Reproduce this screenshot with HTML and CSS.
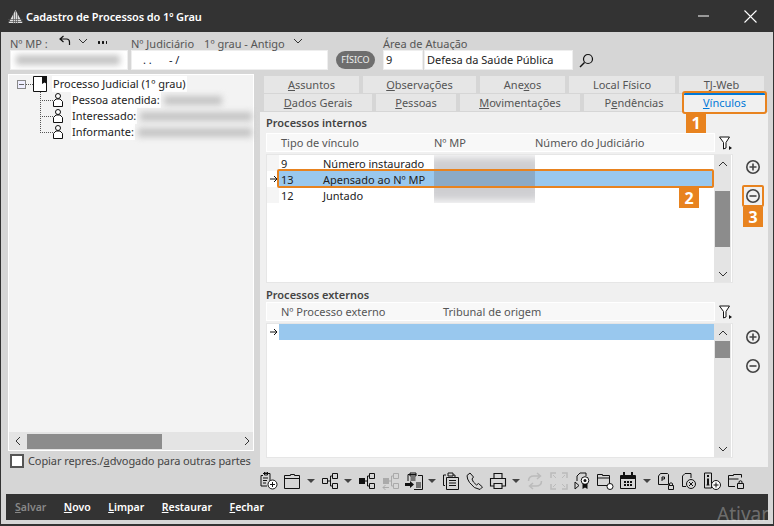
FILE: index.html
```html
<!DOCTYPE html>
<html lang="pt">
<head>
  <meta charset="UTF-8">
  <title>Cadastro de Processos do 1º Grau</title>
  <link rel="stylesheet" href="styles.css">
</head>
<body>
  <!-- simbolos reutilizados -->
  <svg class="sprite" width="0" height="0">
    <symbol id="chev-down" viewBox="0 0 10 6"><path d="M1 1l4 4 4-4" fill="none" stroke="#333"/></symbol>
    <symbol id="chev-up" viewBox="0 0 10 6"><path d="M1 5l4-4 4 4" fill="none" stroke="#333"/></symbol>
    <symbol id="chev-left" viewBox="0 0 6 10"><path d="M5 1L1 5l4 4" fill="none" stroke="#333"/></symbol>
    <symbol id="chev-right" viewBox="0 0 6 10"><path d="M1 1l4 4-4 4" fill="none" stroke="#333"/></symbol>
    <symbol id="arrow" viewBox="0 0 8 8"><path d="M0 4h7M4 1l3 3-3 3" fill="none" stroke="#111"/></symbol>
    <symbol id="person" viewBox="0 0 12 14"><circle cx="6" cy="3" r="2.5" fill="#fff" stroke="#111"/><path d="M4 6h4L10.500 8.500v5h-9v-5z" fill="#fff" stroke="#111"/></symbol>
    <symbol id="funnel" viewBox="0 0 13 14"><path d="M.5 1h10L7 6.5V12L4.5 13V6.5z" fill="#fff" stroke="#111"/><path d="M10 10l3 2-3 2z" fill="#111"/></symbol>
    <symbol id="add" viewBox="0 0 16 16"><circle cx="8" cy="8" r="6.2" fill="none" stroke="#444" stroke-width="1.6"/><path d="M4.5 8h7M8 4.5v7" stroke="#444" stroke-width="1.6"/></symbol>
    <symbol id="remove" viewBox="0 0 16 16"><circle cx="8" cy="8" r="6.2" fill="none" stroke="#444" stroke-width="1.6"/><path d="M4.5 8h7" stroke="#444" stroke-width="1.6"/></symbol>
    <symbol id="nodes" viewBox="0 0 18 18"><path d="M1.500 6.500h5v5h-5zM11.500 1.500h5v5h-5zM11.500 11.500h5v5h-5zM6.500 9h3M9.500 4v10M9.500 4h2M9.500 14h2" fill="none" stroke="#111"/></symbol>
  </svg>

  <div class="window">
    <header class="titlebar">
      <svg class="logo" width="15" height="15" viewBox="0 0 15 15"><path d="M7.500 1L14.500 14H.5z" fill="#ddd"/><path d="M0 10.500h15M0 12.500h15M5.500 4v11M7.500 2v13M9.500 4v11" stroke="#555" stroke-width=".7"/></svg>
      <span class="title">Cadastro de Processos do 1º Grau</span>
      <svg class="win-min" width="12" height="2" viewBox="0 0 12 2"><path d="M0 1h11" stroke="#fff"/></svg>
      <svg class="win-close" width="13" height="13" viewBox="0 0 13 13"><path d="M.5.5l12 12M12.500.5l-12 12" stroke="#fff" stroke-width="1.100"/></svg>
    </header>

    <main class="main">
      <section class="top-form">
        <div class="field-group group-mp">
          <div class="field-label">
            <span>Nº MP :</span>
            <svg class="undo" width="12" height="10" viewBox="0 0 12 10"><path d="M4.500 1L1 4l3.500 3M1 4h6.500Q10.500 4 10.500 7v3" fill="none" stroke="#111" stroke-width="1.200"/></svg>
            <svg class="chev-small" width="10" height="6"><use href="#chev-down"/></svg>
            <span class="dots"></span>
          </div>
          <div class="input input-mp"><span class="blur-text"></span></div>
        </div>
        <div class="field-group group-jud">
          <div class="field-label">
            <span>Nº Judiciário</span>
            <span class="grau">1º grau - Antigo</span>
            <svg class="chev-grau" width="10" height="6"><use href="#chev-down"/></svg>
          </div>
          <div class="input input-jud">. .&nbsp;&nbsp;&nbsp;&nbsp;&nbsp;&nbsp;- /</div>
        </div>
        <span class="badge-fisico">FÍSICO</span>
        <div class="field-group group-area">
          <div class="field-label">Área de Atuação</div>
          <div class="area-inputs">
            <div class="input input-code">9</div>
            <div class="input input-area">Defesa da Saúde Pública</div>
            <svg class="search" width="15" height="15" viewBox="0 0 15 15"><circle cx="9" cy="6" r="4.500" fill="none" stroke="#111" stroke-width="1.200"/><path d="M5.500 9.500L1 14" stroke="#111" stroke-width="1.500"/></svg>
          </div>
        </div>
      </section>

      <section class="content">
        <aside class="left-col">
          <div class="tree-pane">
            <ul class="tree">
              <li class="tree-root">
                <span class="expander"></span>
                <svg class="doc-icon" width="14" height="16" viewBox="0 0 14 16"><path d="M.5.5h13v15H.5z" fill="#fff" stroke="#111"/><path d="M9 0h5v8l-2.500-1.500L9 8z" fill="#111"/></svg>
                <span class="node-text">Processo Judicial (1º grau)</span>
              </li>
              <li class="tree-child">
                <svg class="person" width="12" height="14"><use href="#person"/></svg>
                <span class="node-text">Pessoa atendida:</span><span class="tree-blur short"></span>
              </li>
              <li class="tree-child">
                <svg class="person" width="12" height="14"><use href="#person"/></svg>
                <span class="node-text">Interessado:</span><span class="tree-blur"></span>
              </li>
              <li class="tree-child">
                <svg class="person" width="12" height="14"><use href="#person"/></svg>
                <span class="node-text">Informante:</span><span class="tree-blur"></span>
              </li>
            </ul>
            <div class="hscroll">
              <svg class="h-chev" width="6" height="10"><use href="#chev-left"/></svg>
              <div class="h-thumb"></div>
              <svg class="h-chev right" width="6" height="10"><use href="#chev-right"/></svg>
            </div>
          </div>
          <label class="copy-check"><span class="box"></span><span>Copiar repres./<u>a</u>dvogado para outras partes</span></label>
        </aside>

        <div class="right-col">
          <nav class="tabs">
            <div class="tab-row row-back">
              <span class="tab t-assuntos"><u>A</u>ssuntos</span>
              <span class="tab t-obs"><u>O</u>bservações</span>
              <span class="tab t-anexos">Ane<u>x</u>os</span>
              <span class="tab t-local">Local Físico</span>
              <span class="tab t-tj">TJ-Web</span>
            </div>
            <div class="tab-row">
              <span class="tab t-dados"><u>D</u>ados Gerais</span>
              <span class="tab t-pessoas"><u>P</u>essoas</span>
              <span class="tab t-mov"><u>M</u>ovimentações</span>
              <span class="tab t-pend">P<u>e</u>ndências</span>
              <span class="tab tab-active"><u>V</u>ínculos<span class="mark mark-1">1</span></span>
            </div>
          </nav>

          <div class="tab-panel">
            <section class="grid-section first">
              <h3 class="section-title">Processos internos</h3>
              <div class="grid-head head-int">
                <span>Tipo de vínculo</span><span>Nº MP</span><span>Número do Judiciário</span>
              </div>
              <svg class="filter" width="13" height="14"><use href="#funnel"/></svg>
              <div class="list list-int">
                <div class="rows">
                  <div class="row"><span class="ind"></span><span class="c-num">9</span><span>Número instaurado</span></div>
                  <div class="row selected">
                    <span class="ind"><svg width="8" height="8"><use href="#arrow"/></svg></span><span class="c-num">13</span><span>Apensado ao Nº MP</span>
                    <span class="row-outline"></span><span class="mark mark-2">2</span>
                  </div>
                  <div class="row"><span class="ind"></span><span class="c-num">12</span><span>Juntado</span></div>
                  <div class="blur-col"></div>
                </div>
                <div class="vscroll">
                  <svg class="v-chev" width="10" height="6"><use href="#chev-up"/></svg>
                  <div class="thumb thumb-int"></div>
                  <svg class="v-chev bottom" width="10" height="6"><use href="#chev-down"/></svg>
                </div>
              </div>
              <div class="actions">
                <span class="act-btn"><svg width="16" height="16"><use href="#add"/></svg></span>
                <span class="act-btn outlined"><svg width="16" height="16"><use href="#remove"/></svg><span class="mark mark-3">3</span></span>
              </div>
            </section>

            <section class="grid-section second">
              <h3 class="section-title">Processos externos</h3>
              <div class="grid-head head-ext">
                <span>Nº Processo externo</span><span>Tribunal de origem</span>
              </div>
              <svg class="filter" width="13" height="14"><use href="#funnel"/></svg>
              <div class="list list-ext">
                <div class="rows">
                  <div class="row selected"><span class="ind"><svg width="8" height="8"><use href="#arrow"/></svg></span></div>
                </div>
                <div class="vscroll">
                  <svg class="v-chev" width="10" height="6"><use href="#chev-up"/></svg>
                  <div class="thumb thumb-ext"></div>
                  <svg class="v-chev bottom" width="10" height="6"><use href="#chev-down"/></svg>
                </div>
              </div>
              <div class="actions">
                <span class="act-btn"><svg width="16" height="16"><use href="#add"/></svg></span>
                <span class="act-btn"><svg width="16" height="16"><use href="#remove"/></svg></span>
              </div>
            </section>
          </div>
        </div>
      </section>

      <div class="toolbar">
        <svg class="tool" viewBox="0 0 18 18"><path d="M3 3.500h-2V14h6M3 1.500h7v8M4.500 0h3v3h-3zM3 6h5M3 8.500h4M3 11h3" fill="none" stroke="#111"/><circle cx="12.500" cy="12.500" r="4.500" fill="#fff" stroke="#111"/><path d="M10 12.500h5M12.500 10v5" stroke="#111"/></svg>
        <svg class="tool" viewBox="0 0 18 18"><path d="M1.500 3.500h6v-1h4v1h5v13h-15zM1.500 6.500h15" fill="none" stroke="#111"/></svg>
        <span class="caret"></span>
        <svg class="tool"><use href="#nodes"/></svg>
        <span class="caret"></span>
        <svg class="tool" viewBox="0 0 18 18"><path d="M1 6h6v6H1z" fill="#111"/><path d="M11.500 1.500h5v5h-5zM11.500 11.500h5v5h-5zM6.500 9h3M9.500 4v10M9.500 4h2M9.500 14h2" fill="none" stroke="#111"/></svg>
        <svg class="tool" viewBox="0 0 18 18"><path d="M1 6h6v6H1z" fill="#aaa"/><path d="M11.500 1.500h5v5h-5zM11.500 11.500h5v5h-5zM6.500 9h3M9.500 4v10M9.500 4h2M9.500 14h2M1 15.500h6M3.500 13l-2.500 2.500L3.500 18" fill="none" stroke="#aaa"/></svg>
        <svg class="tool" viewBox="0 0 18 18"><path d="M3 9V2.500h8M5 1h6v3H5zM5.500 6h5M5.500 8h5M13 3.500h4.500v14H9M11 11h5M11 13h5M11 15h5" fill="none" stroke="#111"/><path d="M0 11h5V9l4 3.500L5 16v-2H0z" fill="#111"/></svg>
        <span class="caret"></span>
        <svg class="tool" viewBox="0 0 18 18"><path d="M3 13.500H1.500V3H4M6 1h5v3H6zM11 3h2v2M4.500 5.500h12v12h-12zM7 8.500h7M7 11h7M7 13.500h7" fill="none" stroke="#111"/></svg>
        <svg class="tool" viewBox="0 0 18 18"><path d="M1 3.500L4 1l3.500 4L6 7q.5 3 4.500 6l2-1.500 4 3.500-2.500 2.500Q8 17 3.500 10.500 1 7 1 3.500z" fill="none" stroke="#111"/></svg>
        <svg class="tool" viewBox="0 0 18 18"><path d="M5 6V1.500h8V6M5 14H1.500V6.500h15V14H13M5 11.500h8v5H5z" fill="none" stroke="#111" stroke-width="1.100"/></svg>
        <span class="caret"></span>
        <svg class="tool" viewBox="0 0 18 18"><path d="M2.500 9Q2.500 4 8 4h6M11 1l3.500 3L11 7M15.500 9q0 5-5.500 5H4M7 17l-3.500-3L7 11" fill="none" stroke="#bbb" stroke-width="1.500"/></svg>
        <svg class="tool" viewBox="0 0 18 18"><path d="M1 6V1h5M12 1h5v5M17 12v5h-5M6 17H1v-5" fill="none" stroke="#bbb" stroke-width="1.500"/><path d="M3 3l3 3M15 3l-3 3M15 15l-3-3M3 15l3-3" stroke="#bbb"/></svg>
        <svg class="tool" viewBox="0 0 18 18"><path d="M4 9V4l3-3h6v3M2 17V10M2 10l4 3.500L2 17" fill="none" stroke="#111"/><circle cx="12" cy="8.500" r="3.800" fill="#fff" stroke="#111"/><circle cx="12" cy="8.500" r="1.500" fill="#111"/><path d="M9.500 12v5l2.500-1.500 2.500 1.500v-5" fill="#111"/></svg>
        <svg class="tool" viewBox="0 0 18 18"><path d="M1.500 13.500v-11h5v1h7v10zM1.500 6h12" fill="none" stroke="#111"/><circle cx="14" cy="14.500" r="3" fill="#fff" stroke="#111"/></svg>
        <svg class="tool" viewBox="0 0 18 18"><path d="M1.500 3.500h15v13h-15z" fill="none" stroke="#111"/><path d="M2 3h14v4H2zM4 0h2v3H4zM12 0h2v3h-2zM5 9h2v2H5zM8 9h2v2H8zM11 9h2v2h-2zM5 12h2v2H5zM8 12h2v2H8zM11 12h2v2h-2z" fill="#111"/></svg>
        <span class="caret"></span>
        <svg class="tool" viewBox="0 0 18 18"><path d="M3.500 1.500h7l1 1v10h-10V4zM5 9V5h2.500v2H5" fill="none" stroke="#111"/><path d="M11.500 13.500h5v4h-5zM12.500 13v-1.500q1.500-1.500 3 0V13" fill="none" stroke="#111"/></svg>
        <svg class="tool" viewBox="0 0 18 18"><path d="M11 1.500H5L2.500 4v10.500H6M11 1.500V6" fill="none" stroke="#111"/><circle cx="11" cy="12" r="4.500" fill="none" stroke="#111"/><path d="M9 10l4 4M13 10l-4 4" stroke="#111"/></svg>
        <svg class="tool" viewBox="0 0 18 18"><path d="M1.500 1h7v15h-7z" fill="none" stroke="#111"/><path d="M4 3h2v2H4zM4 6.500h2v6H4zM3.500 12.500h3v1h-3z" fill="#111"/><circle cx="13" cy="13" r="4.500" fill="#fff" stroke="#111"/><path d="M10.500 13h5M13 10.500v5" stroke="#111"/></svg>
        <svg class="tool" viewBox="0 0 18 18"><path d="M8 14.500H1.500v-11h5v-1h8v3M1.500 7h10" fill="none" stroke="#111"/><path d="M10.500 11.500h6v5h-6zM12 11V9.500q1.500-1.500 3 0V11" fill="none" stroke="#111"/></svg>
      </div>

      <footer class="actionbar">
        <span class="disabled"><u>S</u>alvar</span>
        <span><u>N</u>ovo</span>
        <span><u>L</u>impar</span>
        <span><u>R</u>estaurar</span>
        <span><u>F</u>echar</span>
      </footer>
    </main>
    <span class="watermark">Ativar</span>
  </div>
</body>
</html>
```

FILE: styles.css
```css
* {
  box-sizing: border-box;
  margin: 0;
  padding: 0;
}
html, body {
  width: 774px;
  height: 526px;
  overflow: hidden;
}
body {
  font-family: "Noto Sans", sans-serif;
  font-size: 11px;
  color: #555;
  background: #333;
}
.sprite {
  position: absolute;
}
svg {
  display: block;
  flex: none;
}
u {
  text-underline-offset: 1px;
}
.window {
  position: relative;
  width: 774px;
  height: 526px;
  display: flex;
  flex-direction: column;
  overflow: hidden;
}

/* barra de titulo */
.titlebar {
  height: 32px;
  flex: none;
  display: flex;
  align-items: center;
  padding-left: 8px;
  color: #fff;
}
.title {
  margin-left: 3px;
  font-weight: 600;
  letter-spacing: -.1px;
}
.win-min {
  margin-left: auto;
}
.win-close {
  margin: 0 17px 0 34px;
}

.main {
  flex: 1;
  margin: 0 1px 2px 1px;
  padding: 0 0 4px 0;
  background: #d6d6d6;
  display: flex;
  flex-direction: column;
}

/* formulario do topo */
.top-form {
  height: 38px;
  flex: none;
  display: flex;
  align-items: flex-end;
  padding-left: 9px;
}
.field-label {
  height: 13px;
  display: flex;
  align-items: center;
  white-space: nowrap;
}
.input {
  height: 20px;
  background: #fff;
  border: 1px solid #eee;
  color: #222;
  line-height: 18px;
}
.group-mp {
  width: 118px;
  margin-right: 3px;
}
.undo {
  margin: -8px 0 0 11px;
}
.chev-small {
  margin: -5px 0 0 7px;
}
.dots {
  width: 10px;
  height: 3px;
  margin: -3px 0 0 9px;
  background: radial-gradient(circle, #111 1.1px, transparent 1.3px) 0 0 / 4px 3px repeat-x;
}
.input-mp {
  position: relative;
  overflow: hidden;
}
.blur-text {
  display: block;
  width: 104px;
  height: 10px;
  margin: 4px 0 0 5px;
  background: #c4c4c4;
  filter: blur(3px);
}
.group-jud {
  width: 197px;
  margin-right: 8px;
}
.grau {
  margin-left: 10px;
}
.chev-grau {
  margin: -6px 0 0 8px;
}
.input-jud {
  padding-left: 11px;
  color: #123;
}
.badge-fisico {
  width: 39px;
  height: 18px;
  margin: 0 8px 1px 0;
  border-radius: 9px;
  background: #6e6e6e;
  color: #eee;
  font-size: 9px;
  line-height: 18px;
  text-align: center;
}
.area-inputs {
  display: flex;
  align-items: center;
}
.input-code {
  width: 40px;
  margin-right: 1px;
  padding-left: 2px;
}
.input-area {
  width: 149px;
  padding-left: 2px;
}
.search {
  margin-left: 6px;
}

/* area principal */
.content {
  height: 398px;
  flex: none;
  display: flex;
  padding: 4px 0 0 7px;
}
.left-col {
  width: 246px;
  margin-right: 6px;
  display: flex;
  flex-direction: column;
}
.tree-pane {
  height: 378px;
  display: flex;
  flex-direction: column;
  justify-content: space-between;
  border: 1px solid #fff;
  background: #f3f3f3;
}
.tree {
  list-style: none;
  padding-top: 1px;
}
.tree li {
  height: 16px;
  display: flex;
  align-items: center;
  position: relative;
}
.tree-root {
  padding-left: 8px;
}
.expander {
  width: 9px;
  height: 9px;
  border: 1px solid #888;
  background: linear-gradient(#666, #666) center / 5px 1px no-repeat #eef;
}
.tree-root::after {
  content: "";
  position: absolute;
  left: 17px;
  top: 8px;
  width: 7px;
  border-top: 1px dotted #555;
}
.doc-icon {
  margin-left: 7px;
  margin-right: 5px;
  position: relative;
  z-index: 1;
}
.node-text {
  background: #fff;
  color: #222;
  padding: 0 1px;
  line-height: 16px;
  white-space: nowrap;
}
.tree-child {
  padding-left: 43px;
}
.tree-child::before {
  content: "";
  position: absolute;
  left: 31px;
  top: -8px;
  width: 12px;
  height: 16px;
  border-left: 1px dotted #555;
  border-bottom: 1px dotted #555;
}
.person {
  margin-right: 7px;
  position: relative;
}
.tree-blur {
  flex: 1;
  height: 9px;
  margin: 0 1px 0 3px;
  background: #c4c4c4;
  filter: blur(3px);
}
.tree-blur.short {
  flex: none;
  width: 58px;
}
.hscroll {
  height: 18px;
  background: #e4e4e4;
  display: flex;
  align-items: center;
}
.h-chev {
  margin-left: 6px;
}
.h-chev.right {
  margin-left: 82px;
}
.h-thumb {
  width: 135px;
  height: 15px;
  margin-left: 6px;
  background: #8c8c8c;
}
.copy-check {
  display: flex;
  align-items: center;
  margin: 2px 0 0 2px;
  white-space: nowrap;
  color: #444;
  letter-spacing: -.09px;
}
.box {
  flex: none;
  width: 14px;
  height: 14px;
  margin-right: 4px;
  background: #fff;
  border: 2px solid #555;
}

/* abas */
.right-col {
  width: 508px;
  padding-top: 2px;
  display: flex;
  flex-direction: column;
}
.tabs {
  height: 36px;
  flex: none;
  padding-left: 4px;
}
.tab-row {
  height: 18px;
  display: flex;
  gap: 4px;
}
.tab {
  height: 17px;
  background: #e6e6e6;
  text-align: center;
  line-height: 17px;
  white-space: nowrap;
  color: #555;
}
.t-assuntos { width: 95px; }
.t-obs { width: 113px; }
.t-anexos { width: 85px; }
.t-local { width: 106px; }
.t-tj { width: 85px; }
.t-dados { width: 108px; }
.t-pessoas { width: 80px; }
.t-mov { width: 120px; }
.t-pend { width: 100px; }
.tab-active {
  width: 81px;
  height: 19px;
  margin: -1px 0 0 -4px;
  position: relative;
  z-index: 2;
  background: #f0f0f0;
  border-top: 2px solid #0078d7;
  line-height: 15px;
  color: #0078d7;
  outline: 2px solid #e8831f;
  border-radius: 1px;
}

/* marcadores laranja */
.mark {
  position: absolute;
  width: 20px;
  height: 20px;
  background: #e8831f;
  color: #fff;
  font-size: 16px;
  font-weight: 700;
  line-height: 20px;
  text-align: center;
  z-index: 3;
}
.mark-1 {
  left: 2px;
  top: 18px;
}
.mark-2 {
  right: 15px;
  top: 17px;
}
.mark-3 {
  left: 1px;
  top: 22px;
}

/* painel da aba */
.tab-panel {
  height: 355px;
  flex: none;
  background: #f0f0f0;
  padding: 4px 0 0 6px;
}
.grid-section {
  display: grid;
  grid-template-columns: 449px 18px 35px;
  row-gap: 2px;
}
.grid-section.first {
  grid-template-rows: 15px 19px 129px;
}
.grid-section.second {
  grid-template-rows: 12px 19px 135px;
  margin-top: 5px;
}
.section-title {
  grid-column: 1 / -1;
  font-size: 11px;
  font-weight: 600;
  line-height: 14px;
  color: #444;
  align-self: start;
}
.grid-head {
  grid-row: 2;
  background: #f8f8f8;
  border: 1px solid #fff;
  display: grid;
  align-items: center;
  padding-left: 14px;
}
.head-int {
  grid-template-columns: 153px 101px 1fr;
}
.head-ext {
  grid-template-columns: 162px 1fr;
}
.filter {
  grid-row: 2;
  grid-column: 2;
  margin: 3px 0 0 4px;
}
.list {
  grid-row: 3;
  grid-column: 1 / 3;
  display: flex;
  background: #fff;
  border: 1px solid #e6e6e6;
  position: relative;
}
.rows {
  flex: 1;
  position: relative;
}
.row {
  height: 16px;
  display: grid;
  grid-template-columns: 12px 44px 1fr;
  align-items: center;
  color: #222;
  position: relative;
}
.ind {
  height: 16px;
  background: #f5f5f5;
  display: flex;
  align-items: center;
  padding-left: 3px;
}
.c-num {
  padding-left: 2px;
}
.selected {
  background: #99c8ee;
}
.selected .ind {
  background: #fff;
}
.row-outline {
  position: absolute;
  left: 10px;
  right: 0;
  top: -2px;
  bottom: -1px;
  border: 2px solid #e8831f;
  border-radius: 2px;
  z-index: 2;
}
.blur-col {
  position: absolute;
  left: 167px;
  top: 0;
  width: 101px;
  height: 48px;
  overflow: hidden;
}
.blur-col::before {
  content: "";
  position: absolute;
  inset: 2px -6px;
  background: rgba(110, 110, 120, .34);
  filter: blur(4px);
}
.vscroll {
  width: 17px;
  margin: 0 1px 0 0;
  background: #e4e4e4;
  display: flex;
  flex-direction: column;
  align-items: center;
}
.v-chev {
  margin-top: 6px;
}
.v-chev.bottom {
  margin-top: auto;
  margin-bottom: 5px;
}
.thumb {
  width: 15px;
  background: #8c8c8c;
}
.thumb-int {
  height: 56px;
  margin-top: 24px;
}
.thumb-ext {
  height: 17px;
  margin-top: 5px;
}
.actions {
  grid-row: 3;
  grid-column: 3;
  display: flex;
  flex-direction: column;
  gap: 7px;
  padding: 2px 0 0 9px;
}
.second .actions {
  padding-top: 3px;
}
.act-btn {
  width: 22px;
  height: 22px;
  display: flex;
  align-items: center;
  justify-content: center;
  position: relative;
}
.outlined {
  outline: 2px solid #e8831f;
  outline-offset: -2px;
  border-radius: 2px;
}

/* barra de icones */
.toolbar {
  height: 26px;
  flex: none;
  display: flex;
  align-items: center;
  gap: 5.25px;
  padding-left: 259px;
}
.tool {
  width: 18px;
  height: 18px;
}
.caret {
  width: 8px;
  margin-right: 1px;
  border-top: 4px solid #444;
  border-left: 4px solid transparent;
  border-right: 4px solid transparent;
}

/* barra de botoes */
.actionbar {
  height: 26px;
  flex: none;
  margin: 0 5px;
  padding-left: 9px;
  background: #333;
  display: flex;
  align-items: center;
  gap: 17.5px;
  color: #fff;
  font-size: 10.5px;
  font-weight: 600;
}
.actionbar .disabled {
  color: #888;
}
.watermark {
  position: absolute;
  left: 717px;
  top: 507px;
  font-size: 19px;
  line-height: 15px;
  color: rgba(255, 255, 255, .3);
}
```
